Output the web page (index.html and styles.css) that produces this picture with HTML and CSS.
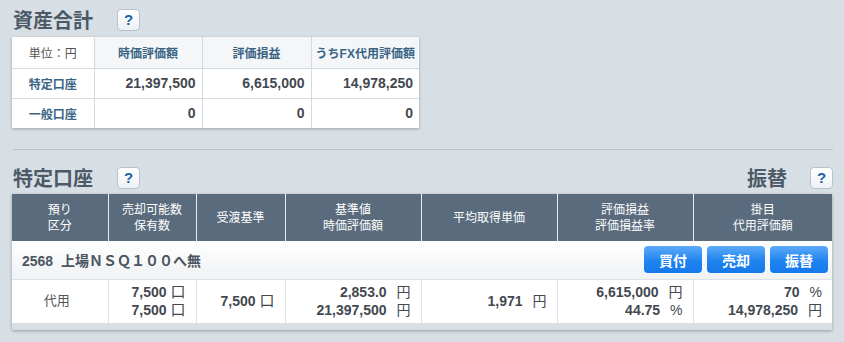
FILE: index.html
```html
<!DOCTYPE html>
<html lang="ja">
<head>
<meta charset="utf-8">
<link rel="stylesheet" href="styles.css">
</head>
<body>
<div class="page">
  <div class="title-row">
    <h2 class="title">資産合計</h2>
    <span class="help">?</span>
  </div>
  <table class="summary">
    <tr>
      <th class="unit">単位：円</th>
      <th>時価評価額</th>
      <th>評価損益</th>
      <th>うちFX代用評価額</th>
    </tr>
    <tr>
      <th class="lbl">特定口座</th>
      <td>21,397,500</td>
      <td>6,615,000</td>
      <td>14,978,250</td>
    </tr>
    <tr>
      <th class="lbl">一般口座</th>
      <td>0</td>
      <td>0</td>
      <td>0</td>
    </tr>
  </table>

  <hr class="sep">

  <div class="title-row two">
    <div class="left">
      <h2 class="title">特定口座</h2>
      <span class="help">?</span>
    </div>
    <div class="right">
      <h2 class="title">振替</h2>
      <span class="help">?</span>
    </div>
  </div>

  <div class="holdings-wrap">
    <table class="holdings">
      <colgroup>
        <col style="width:96px"><col style="width:88px"><col style="width:89px"><col style="width:136px"><col style="width:136px"><col style="width:136px"><col>
      </colgroup>
      <tr class="head">
        <th>預り<br>区分</th>
        <th>売却可能数<br>保有数</th>
        <th>受渡基準</th>
        <th>基準値<br>時価評価額</th>
        <th>平均取得単価</th>
        <th>評価損益<br>評価損益率</th>
        <th>掛目<br>代用評価額</th>
      </tr>
      <tr class="name-row">
        <td colspan="7">
          <div class="name-inner">
            <span class="name">2568&nbsp;&nbsp;上場ＮＳＱ１００へ無</span>
            <span class="btns">
              <span class="btn">買付</span>
              <span class="btn">売却</span>
              <span class="btn">振替</span>
            </span>
          </div>
        </td>
      </tr>
      <tr class="data">
        <td class="center">代用</td>
        <td class="num">7,500 <span class="u">口</span><br>7,500 <span class="u">口</span></td>
        <td class="num">7,500 <span class="u">口</span></td>
        <td class="num">2,853.0 <span class="u2">円</span><br>21,397,500 <span class="u2">円</span></td>
        <td class="num">1,971 <span class="u2">円</span></td>
        <td class="num">6,615,000 <span class="u2">円</span><br>44.75 <span class="u2">%</span></td>
        <td class="num">70 <span class="u2">%</span><br>14,978,250 <span class="u2">円</span></td>
      </tr>
    </table>
    <div class="foot"></div>
  </div>
</div>
</body>
</html>
```
FILE: styles.css
```css
* { box-sizing: border-box; }
html, body { margin: 0; padding: 0; }
body {
  background: #d7dee4;
  font-family: "Liberation Sans", "Noto Sans CJK JP", sans-serif;
  color: #4b5561;
  width: 844px;
  height: 342px;
  overflow: hidden;
}
.page { padding: 6px 12px 0 12px; }
.title-row { display: flex; align-items: center; height: 27px; }
.title {
  margin: 0;
  font-size: 20px;
  font-weight: bold;
  color: #4c5966;
  font-family: "Noto Sans CJK JP", sans-serif;
  line-height: 27px;
  padding-left: 1px;
}
.help {
  display: inline-flex;
  align-items: center;
  justify-content: center;
  width: 23px;
  height: 22px;
  margin-left: 24px;
  background: linear-gradient(#ffffff, #eef1f4);
  border: 1px solid #b9c3cc;
  border-radius: 4px;
  color: #1d5fa7;
  font-weight: bold;
  font-size: 15px;
  font-family: "Liberation Sans", sans-serif;
}
.summary {
  margin-top: 4px;
  border-collapse: collapse;
  background: #fff;
  box-shadow: 0 1px 3px rgba(0,0,0,0.25);
  font-size: 12px;
}
.summary th, .summary td {
  border: 1px solid #d3dae0;
  height: 30px;
  padding: 0 6px;
}
.summary tr:first-child th { height: 31px; color: #3b6585; font-weight: bold; background: #f4f6f8; }
.summary tr:first-child th.unit { background: #fff; color: #555; font-weight: normal; }
.summary th.unit { width: 82px; }
.summary tr:first-child th:nth-child(2) { width: 108px; }
.summary tr:first-child th:nth-child(3) { width: 109px; }
.summary tr:first-child th:nth-child(4) { width: 108px; padding: 0 2px; }
.summary th.lbl { color: #3b6585; font-weight: bold; background: #fff; }
.summary td { text-align: right; font-weight: bold; font-size: 14px; color: #43484f; }
.summary tr:first-child th { border-top: none; }
.summary tr:last-child th, .summary tr:last-child td { border-bottom: none; }
.summary tr th:first-child { border-left: none; }
.summary tr td:last-child, .summary tr:first-child th:last-child { border-right: none; }

.sep {
  border: none;
  border-top: 1px solid #b8c2cb;
  margin: 21px 0 14px 1px;
  width: 820px;
}
.title-row.two { justify-content: space-between; width: 821px; }
.left, .right { display: flex; align-items: center; }
.right .help { margin-left: 23px; }

.holdings-wrap {
  margin-top: 3px;
  width: 820px;
  box-shadow: 0 1px 3px rgba(0,0,0,0.3);
  background: #fff;
}
.holdings {
  width: 820px;
  border-collapse: collapse;
  table-layout: fixed;
  font-size: 12px;
}
.holdings .head th {
  background: #596b7c;
  color: #fff;
  font-weight: normal;
  height: 47px;
  line-height: 16px;
  border-left: 1px solid #e9edf0;
  padding: 0;
}
.holdings .head th:first-child { border-left: none; }
.name-row td {
  height: 38px;
  background: linear-gradient(#ffffff, #f0f2f4);
  border-bottom: 1px solid #dde2e6;
  padding: 0 4px 0 10px;
}
.name-inner { display: flex; justify-content: space-between; align-items: center; }
.name { font-weight: bold; font-size: 14px; color: #4b5561; }
.btns { display: flex; gap: 5px; }
.btn {
  display: inline-flex;
  align-items: center;
  justify-content: center;
  width: 58px;
  height: 27px;
  border-radius: 4px;
  background: linear-gradient(#5eaaf8, #1f84f0 55%, #1579ea);
  color: #fff;
  font-weight: bold;
  font-size: 14px;
  font-family: "Noto Sans CJK JP", sans-serif;
}
.data td {
  height: 44px;
  border-left: 1px solid #dde2e6;
  font-weight: bold;
  font-size: 14px;
  color: #43484f;
  line-height: 18px;
  padding: 0 10px 0 4px;
}
.data td:first-child { border-left: none; }
.data td.center { text-align: center; font-weight: normal; color: #555; font-size: 13px; }
.data td.num { text-align: right; }
.u { font-weight: normal; font-size: 15px; }
.u2 { font-weight: normal; margin-left: 6px; font-size: 14px; }
.foot { height: 7px; background: #d9dfe4; }
```
